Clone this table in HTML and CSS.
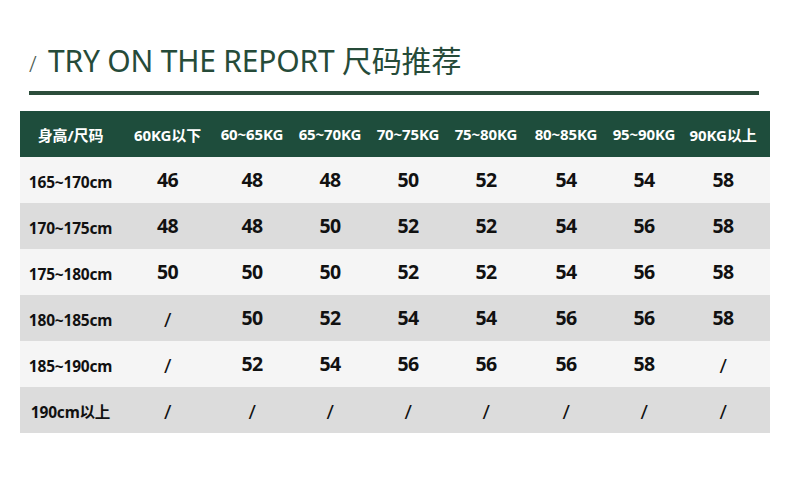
FILE: index.html
```html
<!DOCTYPE html>
<html lang="zh">
<head>
<meta charset="utf-8">
<title>尺码推荐</title>
<link rel="stylesheet" href="styles.css">
</head>
<body>
<div class="page">
  <h1 class="title"><span class="slash">/</span><span class="title-text">TRY ON THE REPORT 尺码推荐</span></h1>
  <div class="rule"></div>
  <div class="table">
    <div class="row head">
      <div class="cell">身高/尺码</div>
      <div class="cell">60KG以下</div>
      <div class="cell">60~65KG</div>
      <div class="cell">65~70KG</div>
      <div class="cell">70~75KG</div>
      <div class="cell">75~80KG</div>
      <div class="cell">80~85KG</div>
      <div class="cell">95~90KG</div>
      <div class="cell">90KG以上</div>
    </div>
    <div class="row light">
      <div class="cell label">165~170cm</div>
      <div class="cell">46</div><div class="cell">48</div><div class="cell">48</div><div class="cell">50</div>
      <div class="cell">52</div><div class="cell">54</div><div class="cell">54</div><div class="cell">58</div>
    </div>
    <div class="row grey">
      <div class="cell label">170~175cm</div>
      <div class="cell">48</div><div class="cell">48</div><div class="cell">50</div><div class="cell">52</div>
      <div class="cell">52</div><div class="cell">54</div><div class="cell">56</div><div class="cell">58</div>
    </div>
    <div class="row light">
      <div class="cell label">175~180cm</div>
      <div class="cell">50</div><div class="cell">50</div><div class="cell">50</div><div class="cell">52</div>
      <div class="cell">52</div><div class="cell">54</div><div class="cell">56</div><div class="cell">58</div>
    </div>
    <div class="row grey">
      <div class="cell label">180~185cm</div>
      <div class="cell sl">/</div><div class="cell">50</div><div class="cell">52</div><div class="cell">54</div>
      <div class="cell">54</div><div class="cell">56</div><div class="cell">56</div><div class="cell">58</div>
    </div>
    <div class="row light">
      <div class="cell label">185~190cm</div>
      <div class="cell sl">/</div><div class="cell">52</div><div class="cell">54</div><div class="cell">56</div>
      <div class="cell">56</div><div class="cell">56</div><div class="cell">58</div><div class="cell sl">/</div>
    </div>
    <div class="row grey">
      <div class="cell label">190cm以上</div>
      <div class="cell sl">/</div><div class="cell sl">/</div><div class="cell sl">/</div><div class="cell sl">/</div>
      <div class="cell sl">/</div><div class="cell sl">/</div><div class="cell sl">/</div><div class="cell sl">/</div>
    </div>
  </div>
</div>
</body>
</html>
```

FILE: styles.css
```css
* { box-sizing: border-box; }
html, body { margin: 0; padding: 0; background: #ffffff; }
body {
  font-family: "Noto Sans", "Noto Sans CJK SC", sans-serif;
  width: 790px;
  height: 478px;
  overflow: hidden;
}
.page {
  padding: 46px 20px 0 20px;
}
.title {
  margin: 0 0 0 9px;
  font-size: 30px;
  line-height: 30px;
  height: 30px;
  font-weight: 400;
  color: #264b39;
  display: flex;
  align-items: baseline;
  white-space: nowrap;
}
.slash {
  font-size: 22px;
  font-weight: 300;
  color: #4a5a50;
  width: 19px;
}
.title-text {
  letter-spacing: -0.2px;
}
.rule {
  margin: 15px 11px 0 9px;
  height: 4px;
  background: #2c4d3b;
}
.table {
  margin-top: 16px;
  width: 750px;
}
.row {
  display: grid;
  grid-template-columns: 101px 93px 76px 80px 76px 80px 80px 76px 82px;
  padding-right: 6px;
  height: 46px;
  align-items: center;
}
.head {
  background: #1e4d3c;
  color: #ffffff;
  font-size: 15px;
  font-weight: 700;
  letter-spacing: -0.1px;
}
.light { background: #f5f5f5; }
.grey { background: #dcdcdc; }
.cell {
  text-align: center;
  white-space: nowrap;
}
.light .cell, .grey .cell {
  color: #111111;
  font-size: 19.5px;
  font-weight: 700;
  letter-spacing: -0.6px;
  padding-bottom: 2px;
}
.light .cell.label, .grey .cell.label {
  font-size: 15.5px;
  letter-spacing: -0.2px;
  padding-bottom: 0;
  padding-top: 3px;
}
.light .cell.sl, .grey .cell.sl {
  font-weight: 400;
  font-size: 20px;
  padding-top: 3px;
  padding-bottom: 0;
}
```
